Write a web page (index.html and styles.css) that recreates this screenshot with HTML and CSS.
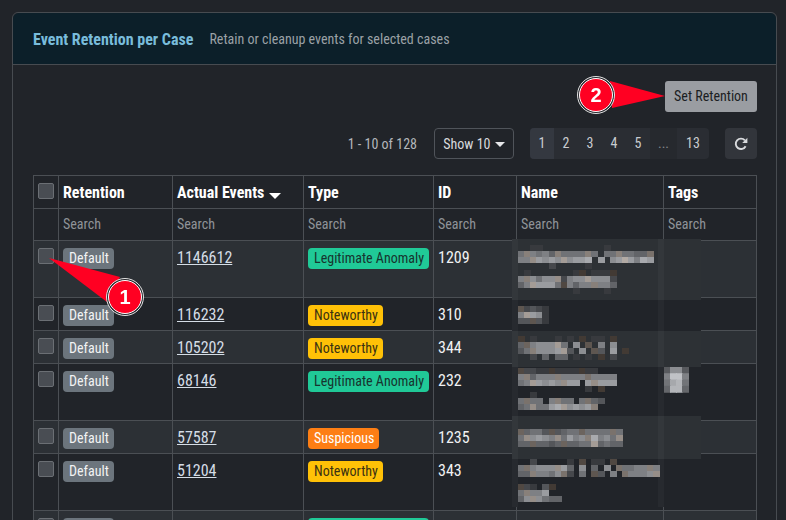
FILE: index.html
```html
<!DOCTYPE html>
<html lang="en">
<head>
  <meta charset="UTF-8">
  <title>Event Retention per Case</title>
  <link rel="stylesheet" href="styles.css">
</head>
<body>
  <div class="card">
    <div class="card-header">
      <span class="card-title">Event Retention per Case</span>
      <span class="card-sub">Retain or cleanup events for selected cases</span>
    </div>
    <div class="card-body">
      <div class="actions">
        <button class="btn-retention">Set Retention</button>
      </div>
      <div class="controls">
        <span class="range">1 - 10 of 128</span>
        <button class="btn-show">Show 10 <i class="caret"></i></button>
        <div class="pager">
          <span class="page active">1</span>
          <span class="page">2</span>
          <span class="page">3</span>
          <span class="page">4</span>
          <span class="page">5</span>
          <span class="page dots">...</span>
          <span class="page last">13</span>
        </div>
        <button class="btn-refresh">
          <svg width="14" height="14" viewBox="0 0 14 14"><path d="M11.6 9.2A5.2 5.2 0 1 1 10.9 3.4" fill="none" stroke="#d8dadd" stroke-width="1.9"/><path d="M13.4 0.8V6H8.2z" fill="#d8dadd"/></svg>
        </button>
      </div>
      <table class="cases">
        <colgroup>
          <col class="c-check"><col class="c-ret"><col class="c-events"><col class="c-type"><col class="c-id"><col class="c-name"><col class="c-tags">
        </colgroup>
        <thead>
          <tr class="head">
            <th><span class="check"></span></th>
            <th>Retention</th>
            <th>Actual Events <i class="caret sort"></i></th>
            <th>Type</th>
            <th>ID</th>
            <th>Name</th>
            <th>Tags</th>
          </tr>
          <tr class="filters">
            <td></td>
            <td>Search</td>
            <td>Search</td>
            <td>Search</td>
            <td>Search</td>
            <td>Search</td>
            <td>Search</td>
          </tr>
        </thead>
        <tbody>
          <tr class="tall">
            <td><span class="check"></span></td>
            <td><span class="badge default">Default</span></td>
            <td><a href="#">1146612</a></td>
            <td><span class="badge legit">Legitimate Anomaly</span></td>
            <td>1209</td><td></td><td></td>
          </tr>
          <tr>
            <td><span class="check"></span></td>
            <td><span class="badge default">Default</span></td>
            <td><a href="#">116232</a></td>
            <td><span class="badge note">Noteworthy</span></td>
            <td>310</td><td></td><td></td>
          </tr>
          <tr>
            <td><span class="check"></span></td>
            <td><span class="badge default">Default</span></td>
            <td><a href="#">105202</a></td>
            <td><span class="badge note">Noteworthy</span></td>
            <td>344</td><td></td><td></td>
          </tr>
          <tr class="tall">
            <td><span class="check"></span></td>
            <td><span class="badge default">Default</span></td>
            <td><a href="#">68146</a></td>
            <td><span class="badge legit">Legitimate Anomaly</span></td>
            <td>232</td><td></td><td></td>
          </tr>
          <tr>
            <td><span class="check"></span></td>
            <td><span class="badge default">Default</span></td>
            <td><a href="#">57587</a></td>
            <td><span class="badge susp">Suspicious</span></td>
            <td>1235</td><td></td><td></td>
          </tr>
          <tr class="tall">
            <td><span class="check"></span></td>
            <td><span class="badge default">Default</span></td>
            <td><a href="#">51204</a></td>
            <td><span class="badge note">Noteworthy</span></td>
            <td>343</td><td></td><td></td>
          </tr>
          <tr class="tall">
            <td><span class="check"></span></td>
            <td><span class="badge default">Default</span></td>
            <td><a href="#">48211</a></td>
            <td><span class="badge legit">Legitimate Anomaly</span></td>
            <td>1187</td><td></td><td></td>
          </tr>
        </tbody>
      </table>
    </div>
  </div>

  <canvas id="blur" class="blur" width="786" height="520"></canvas>

  <svg class="marks" width="786" height="520" viewBox="0 0 786 520">
    <polygon points="49,258 120,277 107,302" fill="#ff0022"/>
    <circle cx="125" cy="297" r="18.5" fill="#23262b" stroke="#e4e4e4"/>
    <circle cx="125" cy="297" r="16.5" fill="#ff0022" stroke="#fff"/>
    <text x="125" y="304" class="mark-num">1</text>
    <polygon points="665,96 610,81 612,108" fill="#ff0022"/>
    <circle cx="596" cy="95" r="18.5" fill="#23262b" stroke="#e4e4e4"/>
    <circle cx="596" cy="95" r="16.5" fill="#ff0022" stroke="#fff"/>
    <text x="596" y="102" class="mark-num">2</text>
  </svg>

  <script src="script.js"></script>
</body>
</html>
```

FILE: styles.css
```css
html, body {
  height: 520px;
  overflow: hidden;
}
body {
  margin: 0;
  padding: 12px 9px 0 12px;
  box-sizing: border-box;
  position: relative;
  background-color: #212429;
  font-family: "Roboto Condensed", "Liberation Sans Narrow", Roboto, sans-serif;
  font-size: 14px;
  color: #e6e7e9;
}
.card {
  border: 1px solid #474b50;
  border-radius: 6px;
  height: 700px;
}
.card-header {
  height: 51px;
  padding: 0 20px;
  display: flex;
  align-items: center;
  gap: 16px;
  background-color: #0c1f29;
  border-bottom: 1px solid #474b50;
  border-radius: 6px 6px 0 0;
}
.card-title {
  color: #79bcdb;
  font-weight: 700;
  font-size: 16px;
  padding-top: 1px;
}
.card-sub {
  color: #9ba1a6;
}
.card-body {
  padding: 16px 19px 0 20px;
}
.actions {
  display: flex;
  justify-content: flex-end;
}
.btn-retention {
  width: 92px;
  height: 31px;
  border: 0;
  border-radius: 3px;
  padding: 0 0 2px;
  background-color: #9a9da2;
  color: #1b1e22;
  font: inherit;
}
.controls {
  display: flex;
  justify-content: flex-end;
  align-items: center;
  margin-top: 16px;
  height: 31px;
}
.range {
  color: #b4b7bb;
  margin-right: 17px;
}
.btn-show {
  width: 80px;
  height: 31px;
  padding: 0;
  margin-right: 16px;
  border: 1px solid #50545a;
  border-radius: 4px;
  background: transparent;
  color: #d8dadd;
  font: inherit;
}
.caret {
  display: inline-block;
  width: 0;
  height: 0;
  margin-left: 1px;
  vertical-align: 2px;
  border-style: solid;
  border-width: 5px 5px 0;
  border-color: #e6e7e9 transparent transparent;
}
.caret.sort {
  border-width: 6px 6px 0;
  border-color: #fff transparent transparent;
  vertical-align: -1px;
  margin-left: 1px;
}
.pager {
  display: flex;
  height: 31px;
  margin-right: 16px;
  border-radius: 4px;
  overflow: hidden;
  background-color: #2a2d33;
  color: #c9ccd0;
}
.page {
  width: 24px;
  line-height: 31px;
  text-align: center;
}
.page.active {
  background-color: #343840;
}
.page.dots {
  width: 27px;
  background-color: #26292e;
  color: #83878c;
}
.page.last {
  width: 32px;
}
.btn-refresh {
  width: 32px;
  height: 31px;
  padding: 0;
  border: 0;
  border-radius: 4px;
  background-color: #32353b;
  display: flex;
  align-items: center;
  justify-content: center;
}
.cases {
  margin-top: 16px;
  border-collapse: collapse;
  table-layout: fixed;
  width: 723px;
}
.c-check { width: 25px; }
.c-ret { width: 114px; }
.c-events { width: 131px; }
.c-type { width: 130px; }
.c-id { width: 83px; }
.c-name { width: 147px; }
.c-tags { width: 93px; }
.cases th, .cases td {
  border: 1px solid #4b4f54;
  padding: 7px 4px 0;
  vertical-align: top;
  text-align: left;
  box-sizing: border-box;
}
.head th {
  height: 33px;
  color: #fff;
  font-weight: 700;
  font-size: 16px;
}
.filters td {
  height: 32px;
  color: #8f9398;
}
tbody tr {
  height: 33px;
}
tbody tr.tall {
  height: 57px;
}
tbody tr:nth-child(odd) {
  background-color: #2c3035;
}
tbody td {
  font-size: 16px;
  color: #f1f2f3;
}
a {
  color: #d5dde6;
}
.check {
  display: block;
  width: 16px;
  height: 16px;
  box-sizing: border-box;
  background-color: #494d53;
  border: 1px solid #6b6f74;
  border-radius: 2px;
}
.badge {
  display: inline-block;
  height: 21px;
  line-height: 21px;
  padding: 0 5px 0 6px;
  border-radius: 4px;
  font-size: 14px;
  vertical-align: top;
  white-space: nowrap;
}
.default {
  background-color: #6c757d;
  color: #f2f3f4;
}
.legit {
  background-color: #20c997;
  color: #17342e;
}
.note {
  background-color: #ffc107;
  color: #3b3212;
}
.susp {
  background-color: #fd7e14;
  color: #fff;
}
.blur, .marks {
  position: absolute;
  left: 0;
  top: 0;
}
.mark-num {
  fill: #fff;
  font-family: "Liberation Sans", sans-serif;
  font-weight: 700;
  font-size: 20px;
  text-anchor: middle;
}
```

FILE: script.js
```js
// the censored name and tag cells, drawn as mosaic tiles
const ctx = document.getElementById('blur').getContext('2d');

// x, y, w, h, colour of the smeared patch behind the tiles
const patches = [
  [512, 239, 189, 61, '#2d3135'],
  [512, 300, 189, 31, '#212429'],
  [512, 331, 189, 36, '#2d3135'],
  [512, 367, 189, 49, '#212429'],
  [512, 416, 189, 43, '#2d3135'],
  [512, 459, 189, 48, '#212429']
];
patches.forEach(p => {
  ctx.fillStyle = p[4];
  ctx.fillRect(p[0], p[1], p[2], p[3]);
});
ctx.fillStyle = 'rgba(255,255,255,0.03)';
ctx.fillRect(512, 239, 6, 268);
ctx.fillRect(658, 239, 6, 268);

// one digit per tile, brighter as it goes up, '.' is left empty
const blocks = [
  [518, 245, ['..11..........1.......',
              '5665646555565.55655445',
              '667878787889.8.7898698',
              '.....2.....1..........']],
  [518, 270, ['.1.......11.1111',
              '6675777267787772',
              '4688885264666664',
              '.........1....1.']],
  [518, 306, ['32321', '68871', '33331']],
  [518, 336, ['1.1...1.1.1.11.1.',
              '44677785.7.3.6.7.',
              '356777883.7.33.8.1',
              '..2.4.44.1.1.1.2.']],
  [518, 368, ['2221111111111...',
              '6646666666656666',
              '5688787788.87888',
              '...........1.1..']],
  [518, 392, ['..1...........',
              '5555.6655.5543',
              '4575589878786']],
  [518, 429, ['44553334554555555',
              '57787675867696757',
              '44444344445584544']],
  [518, 459, ['..2.....1.2.11.2.......',
              '556777784.7.4.7.5556666',
              '446665752.5.33.6.566677']],
  [518, 484, ['221.31',
              '56668',
              '4777544']],
];
blocks.forEach(b => {
  b[2].forEach((row, r) => {
    [...row].forEach((d, c) => {
      if (d === '.') return;
      const v = 42 + parseInt(d, 16) * 14;
      const tint = (c * 7 + r * 3) % 5 === 0 ? 10 : 0;
      ctx.fillStyle = `rgb(${v + tint},${v + 2},${v + 6 - tint})`;
      ctx.fillRect(b[0] + Math.round(c * 6.12), b[1] + r * 6, 7, 6);
    });
  });
});

// tag cell
const tag = ['4884', '7cc7', '6ab6', '5bb5'];
tag.forEach((row, r) => {
  [...row].forEach((d, c) => {
    const v = 36 + parseInt(d, 16) * 13;
    ctx.fillStyle = `rgb(${v},${v + 2},${v + 6})`;
    ctx.fillRect(664 + c * 6, 367 + r * 6.25, 7, 7);
  });
});
```
